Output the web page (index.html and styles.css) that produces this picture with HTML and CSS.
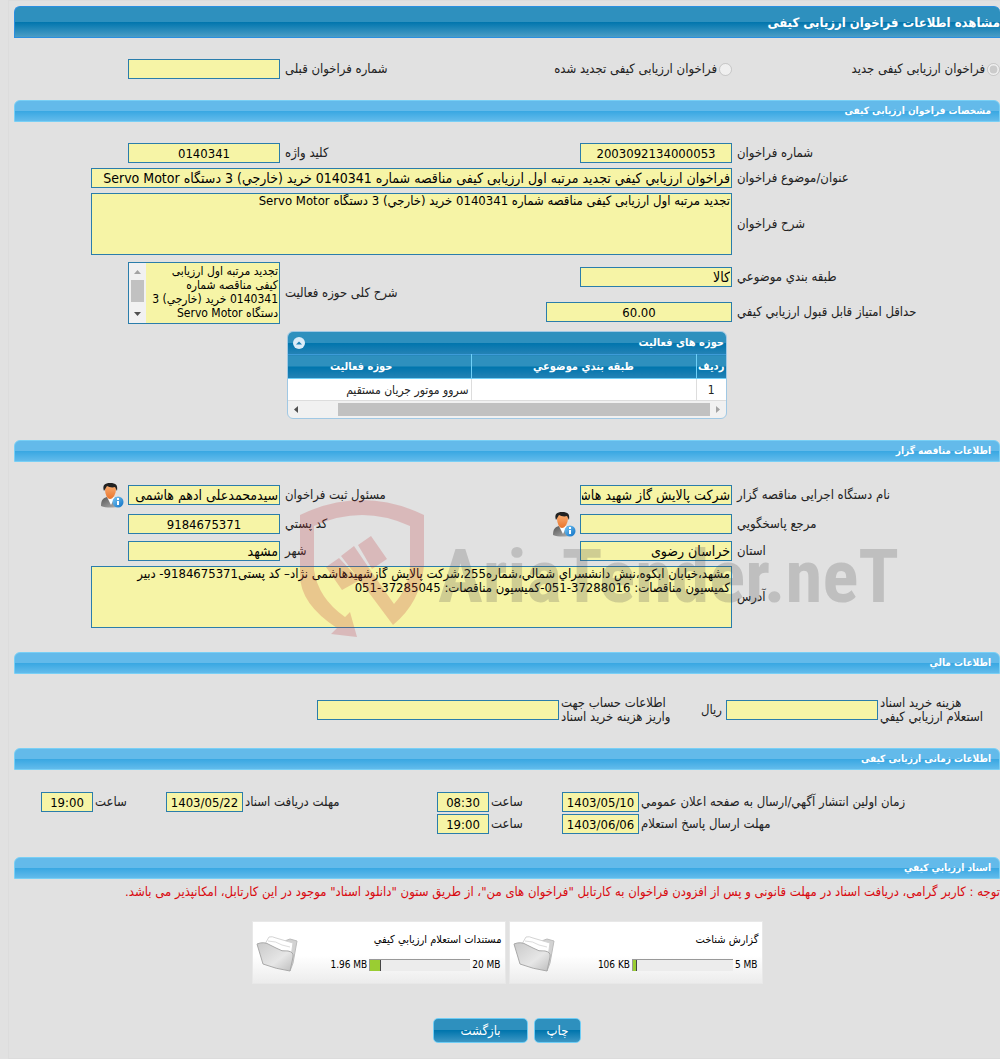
FILE: index.html
```html
<!DOCTYPE html>
<html lang="fa" dir="rtl">
<head>
  <meta charset="UTF-8">
  <title>مشاهده اطلاعات فراخوان ارزیابی کیفی</title>
  <meta name="viewport" content="width=device-width, initial-scale=1.0">
  <link rel="stylesheet" href="styles.css">
</head>
<body>
  <svg class="defs" aria-hidden="true">
    <defs>
      <linearGradient id="suit" x1="0" y1="0" x2="1" y2="1">
        <stop offset="0" stop-color="#555"/>
        <stop offset="1" stop-color="#b5b5b5"/>
      </linearGradient>
      <linearGradient id="face" x1="0" y1="0" x2="0" y2="1">
        <stop offset="0" stop-color="#fbb074"/>
        <stop offset="1" stop-color="#e8742c"/>
      </linearGradient>
      <linearGradient id="badge" x1="0" y1="0" x2="1" y2="1">
        <stop offset="0" stop-color="#7cc8f5"/>
        <stop offset="1" stop-color="#0a6fc4"/>
      </linearGradient>
      <linearGradient id="flap" x1="0" y1="0" x2="1" y2="1">
        <stop offset="0" stop-color="#c9c9c9"/>
        <stop offset="0.6" stop-color="#e6e6e6"/>
        <stop offset="1" stop-color="#bdbdbd"/>
      </linearGradient>
      <symbol id="person" viewBox="0 0 24 26">
        <path d="M1 24c0-6 2-8 6-9l4 2 4-2c4 1 5 4 5 9-5 2-14 2-19 0z" fill="url(#suit)"/>
        <path d="M7 15l4 8 4-8z" fill="#fff"/>
        <path d="M5 7c0-3 2-4 5-4s6 1 6 4c0 5-3 10-6 10S5 12 5 7z" fill="url(#face)"/>
        <path d="M4 9C2 3 5 1 10 1c6 0 8 2 7 8l-2-4c-3 1-6 0-8-1z" fill="#222"/>
        <circle cx="18" cy="20" r="5.500" fill="url(#badge)"/>
        <path d="M17 16h2v2h-2zM17 19h2v4h-2z" fill="#fff"/>
      </symbol>
      <symbol id="folder" viewBox="0 0 42 40">
        <path d="M9 11L26 9l8-3 7 2-4 22-3 8z" fill="#d2d2d2" stroke="#bcbcbc"/>
        <path d="M9 11l4-7q3-1 7 1l17 5-2 14-10-4z" fill="#fff" stroke="#d4d4d4"/>
        <path d="M12 8q8 0 14 4l8 2" fill="none" stroke="#ddd"/>
        <path d="M1 11q7-3 13 1l6 3q6 4 12 3 6 1 5 6l-3 14q-14-2-27-7z" fill="url(#flap)" stroke="#a9a9a9"/>
      </symbol>
    </defs>
  </svg>

  <div class="page">
    <h1 class="title">مشاهده اطلاعات فراخوان ارزیابی کیفی</h1>

    <div class="grid kind">
      <label class="choice"><input type="radio" name="kind" checked disabled>فراخوان ارزیابی کیفی جدید</label>
      <label class="choice renewed"><input type="radio" name="kind" disabled>فراخوان ارزیابی کیفی تجدید شده</label>
      <label class="lbl second" for="prev">شماره فراخوان قبلی</label>
      <input class="field" id="prev" type="text" readonly>
    </div>

    <h2 class="bar">مشخصات فراخوان ارزیابی کیفی</h2>
    <div class="grid specs">
      <label class="lbl" for="num">شماره فراخوان</label>
      <input class="field num" id="num" type="text" value="2003092134000053" readonly>
      <label class="lbl second" for="keyword">کلید واژه</label>
      <input class="field num" id="keyword" type="text" value="0140341" readonly>

      <label class="lbl" for="subject">عنوان/موضوع فراخوان</label>
      <input class="field wide" id="subject" type="text" value="فراخوان ارزیابي کیفي تجدید مرتبه اول ارزیابی کیفی مناقصه شماره 0140341 خرید (خارجي) 3 دستگاه Servo Motor" readonly>

      <label class="lbl" for="desc">شرح فراخوان</label>
      <textarea class="field area wide" id="desc" readonly>تجدید مرتبه اول ارزیابی کیفی مناقصه شماره 0140341 خرید (خارجي) 3 دستگاه Servo Motor</textarea>

      <label class="lbl" for="category">طبقه بندي موضوعي</label>
      <input class="field" id="category" type="text" value="کالا" readonly>
      <label class="lbl second tall" for="scope">شرح کلی حوزه فعالیت</label>
      <div class="field scroller tall">
        <textarea class="scroller-text" id="scope" readonly>تجدید مرتبه اول ارزیابی کیفی مناقصه شماره 0140341 خرید (خارجي) 3 دستگاه Servo Motor</textarea>
        <div class="vbar">
          <svg width="7" height="4"><path d="M0 4L3.500 0 7 4z" fill="#a3a3a3"/></svg>
          <div class="vthumb"></div>
          <svg width="7" height="4"><path d="M0 0h7L3.500 4z" fill="#505050"/></svg>
        </div>
      </div>

      <label class="lbl" for="score">حداقل امتیاز قابل قبول ارزیابي کیفي</label>
      <input class="field num score" id="score" type="text" value="60.00" readonly>
    </div>

    <div class="list">
      <div class="list-head">
        <span>حوزه های فعالیت</span>
        <svg width="12" height="12"><circle cx="6" cy="6" r="6" fill="#dcecf8"/><path d="M3 7.500L6 4.500l3 3z" fill="#1c80b4"/></svg>
      </div>
      <table>
        <thead>
          <tr><th class="col-row">ردیف</th><th class="col-cat">طبقه بندي موضوعي</th><th class="col-field">حوزه فعالیت</th></tr>
        </thead>
        <tbody>
          <tr><td class="center">1</td><td></td><td>سروو موتور جریان مستقیم</td></tr>
        </tbody>
      </table>
      <div class="hbar">
        <svg width="4" height="7"><path d="M0 0v7L4 3.500z" fill="#a3a3a3"/></svg>
        <div class="hthumb"></div>
        <svg width="4" height="7"><path d="M4 0v7L0 3.500z" fill="#505050"/></svg>
      </div>
    </div>

    <h2 class="bar">اطلاعات مناقصه گزار</h2>
    <div class="grid owner">
      <label class="lbl" for="org">نام دستگاه اجرایی مناقصه گزار</label>
      <input class="field" id="org" type="text" value="شرکت پالایش گاز شهید هاشمی نژاد" readonly>
      <label class="lbl second" for="registrar">مسئول ثبت فراخوان</label>
      <div class="with-icon">
        <input class="field" id="registrar" type="text" value="سیدمحمدعلی ادهم هاشمی" readonly>
        <svg class="person"><use href="#person"/></svg>
      </div>

      <label class="lbl" for="contact">مرجع پاسخگویي</label>
      <div class="with-icon">
        <input class="field" id="contact" type="text" readonly>
        <svg class="person"><use href="#person"/></svg>
      </div>
      <label class="lbl second" for="postal">کد پستي</label>
      <input class="field num" id="postal" type="text" value="9184675371" readonly>

      <label class="lbl" for="province">استان</label>
      <input class="field" id="province" type="text" value="خراسان رضوی" readonly>
      <label class="lbl second" for="city">شهر</label>
      <input class="field" id="city" type="text" value="مشهد" readonly>

      <label class="lbl" for="address">آدرس</label>
      <textarea class="field area wide" id="address" readonly>مشهد،خیابان آبکوه،نبش دانشسراي شمالي،شماره255،شرکت پالایش گازشهیدهاشمی نژاد– کد پستی9184675371- دبیر کمیسیون مناقصات: 37288016-051-کمیسیون مناقصات: 37285045-051</textarea>

      <svg class="watermark" viewBox="0 0 602 142" aria-hidden="true">
        <g fill="#c0393f" fill-opacity=".24">
          <path d="M0 15Q62-15 124 15V65Q121 102 93 125L61 82 73 74 94 104Q110 86 110 65V26Q62 4 14 26V70Q18 98 45 117L50 112 57 137 31 134 37 128Q0 104 0 75z"/>
          <path d="M26 67l13-9 21 22-18 10zM41 56l13-10 19 28-12 8zM58 45l13-9 16 23-15 10z"/>
        </g>
        <text x="138" y="102">AriaTender.neT</text>
      </svg>
    </div>

    <h2 class="bar">اطلاعات مالي</h2>
    <div class="money">
      <label class="cost-label" for="cost">هزینه خرید اسناد<br>استعلام ارزیابي کیفي</label>
      <input class="field" id="cost" type="text" readonly>
      <span class="unit">ريال</span>
      <label class="account-label" for="account">اطلاعات حساب جهت<br>واریز هزینه خرید اسناد</label>
      <input class="field account" id="account" type="text" readonly>
    </div>

    <h2 class="bar">اطلاعات زمانی ارزیابی کیفی</h2>
    <div class="times">
      <label class="lbl" for="publish">زمان اولین انتشار آگهي/ارسال به صفحه اعلان عمومي</label>
      <input class="field date" id="publish" type="text" value="1403/05/10" readonly>
      <label class="lbl" for="publish-time">ساعت</label>
      <input class="field time" id="publish-time" type="text" value="08:30" readonly>
      <label class="lbl" for="receive">مهلت دریافت اسناد</label>
      <input class="field date" id="receive" type="text" value="1403/05/22" readonly>
      <label class="lbl" for="receive-time">ساعت</label>
      <input class="field time" id="receive-time" type="text" value="19:00" readonly>
      <label class="lbl first" for="reply">مهلت ارسال پاسخ استعلام</label>
      <input class="field date" id="reply" type="text" value="1403/06/06" readonly>
      <label class="lbl" for="reply-time">ساعت</label>
      <input class="field time" id="reply-time" type="text" value="19:00" readonly>
    </div>

    <h2 class="bar">اسناد ارزیابي کیفي</h2>
    <p class="notice">توجه : کاربر گرامی، دریافت اسناد در مهلت قانونی و پس از افزودن فراخوان به کارتابل "فراخوان های من"، از طریق ستون "دانلود اسناد" موجود در این کارتابل، امکانپذیر می باشد.</p>

    <div class="files">
      <div class="file">
        <div class="file-body">
          <span>گزارش شناخت</span>
          <div class="usage"><bdi>5 MB</bdi><div class="meter"><div class="used" style="width: 4%"></div></div><bdi>106 KB</bdi></div>
        </div>
        <svg class="folder"><use href="#folder"/></svg>
      </div>
      <div class="file">
        <div class="file-body">
          <span>مستندات استعلام ارزیابي کیفي</span>
          <div class="usage"><bdi>20 MB</bdi><div class="meter"><div class="used" style="width: 11%"></div></div><bdi>1.96 MB</bdi></div>
        </div>
        <svg class="folder"><use href="#folder"/></svg>
      </div>
    </div>

    <div class="actions">
      <button type="button">چاپ</button>
      <button type="button" class="back">بازگشت</button>
    </div>
  </div>
</body>
</html>
```

FILE: styles.css
```css
* {
  box-sizing: border-box;
}
body {
  margin: 0;
  background: #e1e1e1;
  color: #222;
  font: 13px/14px Tahoma, "DejaVu Sans Condensed", "DejaVu Sans", sans-serif;
  overflow-x: hidden;
}
.defs {
  position: absolute;
  width: 0;
  height: 0;
}
.page {
  margin-left: 8px;
  padding: 5px 0 15px 5px;
  border: 1px solid #dcdcdc;
  border-right: 0;
}
.title,
.bar {
  margin: 0;
  color: #fff;
  font-weight: bold;
  border-radius: 6px 6px 0 0;
  white-space: nowrap;
}
.title {
  height: 32px;
  font-size: 13px;
  line-height: 31px;
  border: 1px solid #2a8fe0;
  border-right: 0;
  background: linear-gradient(#2e90be 50%, #0075ad 50%, #4a9dc6);
}
.bar {
  height: 22px;
  padding: 0 8px;
  font-size: 10px;
  line-height: 20px;
  border: 1px solid #78cff5;
  background: linear-gradient(#63baea 50%, #38a7e2 50%, #62bbeb);
}

.grid {
  position: relative;
  display: grid;
  grid-template-columns: 263fr 187px 255fr 189px 72fr;
  gap: 5px;
  align-items: center;
}
.kind {
  padding: 21px 0;
}
.specs {
  grid-template-rows: 20px 20px 62px 34px 26px;
  padding: 21px 0 6px;
}
.owner {
  grid-template-rows: 24px 24px 20px 62px;
  padding: 21px 0 24px;
}
.choice {
  display: flex;
  align-items: center;
  gap: 2px;
  white-space: nowrap;
}
.choice input {
  width: 13px;
  height: 13px;
  margin: 0;
}
.renewed {
  grid-column: 2;
}
.lbl {
  grid-column: 1;
  text-align: left;
  white-space: nowrap;
}
.second {
  grid-column: 3;
}
.field {
  width: 152px;
  height: 20px;
  margin: 0;
  padding: 0 1px;
  border: 1px solid #2a7dab;
  border-radius: 0;
  background: #f6f4a6;
  color: #000;
  font: 14px "DejaVu Sans Condensed", "DejaVu Sans", sans-serif;
  outline: 0;
}
.num,
.date,
.time {
  font-size: 13px;
  text-align: center;
}
.score {
  width: 186px;
}
.wide {
  grid-column: 2 / 5;
  width: 100%;
}
.area {
  height: 62px;
  font-size: 13px;
  line-height: 14px;
  resize: none;
  overflow: hidden;
}
.scroller {
  display: flex;
  grid-column: 4;
  height: 62px;
  padding: 0;
}
.tall {
  grid-row: 4 / 6;
}
.scroller-text {
  flex: 1;
  min-width: 0;
  margin: 0;
  padding: 1px;
  border: 0;
  background: none;
  font: 12px/14px "DejaVu Sans Condensed", "DejaVu Sans", sans-serif;
  resize: none;
  overflow: hidden;
}
.vbar {
  display: flex;
  flex-direction: column;
  align-items: center;
  width: 17px;
  padding: 7px 0;
  background: #f1f1f1;
}
.vthumb {
  width: 13px;
  height: 22px;
  margin: 6px 0 auto;
  background: #c1c1c1;
}
.with-icon {
  display: flex;
  align-items: center;
  gap: 4px;
}
.person {
  width: 24px;
  height: 26px;
}

.list {
  width: 440px;
  margin: 0 auto 21px;
  border: 1px solid #a0c8e4;
  border-radius: 6px;
  overflow: hidden;
  background: #f1f1f1;
}
.list-head {
  display: flex;
  justify-content: space-between;
  align-items: center;
  height: 22px;
  padding: 0 2px 0 5px;
  color: #fff;
  font-size: 11px;
  font-weight: bold;
  background: linear-gradient(#2e90be 50%, #0075ad 50%, #2482b5);
}
table {
  width: 100%;
  table-layout: fixed;
  border-collapse: collapse;
}
th {
  height: 24px;
  padding: 0;
  color: #fff;
  font-size: 11px;
  border-top: 1px solid #3d9bd8;
  border-bottom: 1px solid #6fd0f8;
  border-left: 1px solid #6fd0f8;
  background: linear-gradient(#2e90be 50%, #0075ad 50%, #2482b5);
}
td {
  height: 22px;
  padding: 0 2px;
  font-size: 12px;
  border-left: 1px solid #ddd;
  border-bottom: 1px solid #ddd;
  background: #fff;
}
th:last-child,
td:last-child {
  border-left: 0;
}
.col-row {
  width: 30px;
}
.col-cat {
  width: 225px;
}
.col-field {
  padding-right: 36px;
}
.center {
  text-align: center;
}
.hbar {
  display: flex;
  align-items: center;
  height: 17px;
  padding: 0 6px;
}
.hthumb {
  width: 372px;
  height: 13px;
  margin: 0 6px 0 auto;
  background: #c1c1c1;
}
.watermark {
  position: absolute;
  top: 38px;
  left: 286px;
  width: 602px;
  height: 142px;
  direction: ltr;
  pointer-events: none;
}
.watermark text {
  font: bold 75px "Liberation Sans Narrow", "Roboto Condensed", "Open Sans Condensed", Roboto, sans-serif;
  fill: #555;
  fill-opacity: .24;
}

.money {
  display: flex;
  align-items: center;
  gap: 2px;
  padding: 22px 10px 24px;
}
.money label {
  white-space: nowrap;
}
.cost-label {
  width: 110px;
  text-align: left;
}
.unit {
  width: 21px;
  margin-right: 2px;
}
.account-label {
  width: 138px;
  text-align: left;
}
.account {
  width: 242px;
}
.times {
  display: grid;
  grid-template-columns: 359fr 77px 69fr 52px 190fr 77px 69fr 52px 25fr;
  gap: 2px;
  align-items: center;
  padding: 22px 0 23px;
}
.times .lbl {
  grid-column: auto;
}
.times .first {
  grid-column: 1;
}
.date {
  width: 77px;
  padding: 0;
}
.time {
  width: 52px;
}

.notice {
  margin: 6px 0 22px;
  color: #d9090f;
  font-size: 13px;
  white-space: nowrap;
}
.files {
  display: flex;
  justify-content: center;
  gap: 3px;
}
.file {
  display: flex;
  align-items: center;
  width: 254px;
  height: 63px;
  padding: 0 3px;
  border: 1px solid #e8e8e8;
  background: linear-gradient(#fff 55%, #ececec);
  color: #000;
  font-size: 11px;
}
.file-body {
  flex: 1;
  white-space: nowrap;
}
.usage {
  display: flex;
  align-items: center;
  gap: 2px;
  margin-top: 11px;
  padding-right: 1px;
  font-size: 10px;
}
.meter {
  display: flex;
  justify-content: flex-end;
  width: 101px;
  height: 12px;
  border-top: 1px solid #999;
  border-left: 1px solid #999;
  background: #ececec;
}
.used {
  background: #9acd32;
  border-right: 1px solid #444;
}
.folder {
  width: 42px;
  height: 40px;
}
.actions {
  display: flex;
  justify-content: center;
  gap: 6px;
  margin-top: 34px;
}
button {
  width: 47px;
  height: 25px;
  padding: 0;
  border: 1px solid #6fcdf5;
  border-radius: 5px;
  background: linear-gradient(#2e90be 50%, #0075ad 50%, #3d97c4);
  color: #fff;
  font: 13px "DejaVu Sans Condensed", "DejaVu Sans", sans-serif;
  cursor: pointer;
}
.back {
  width: 95px;
}
```
